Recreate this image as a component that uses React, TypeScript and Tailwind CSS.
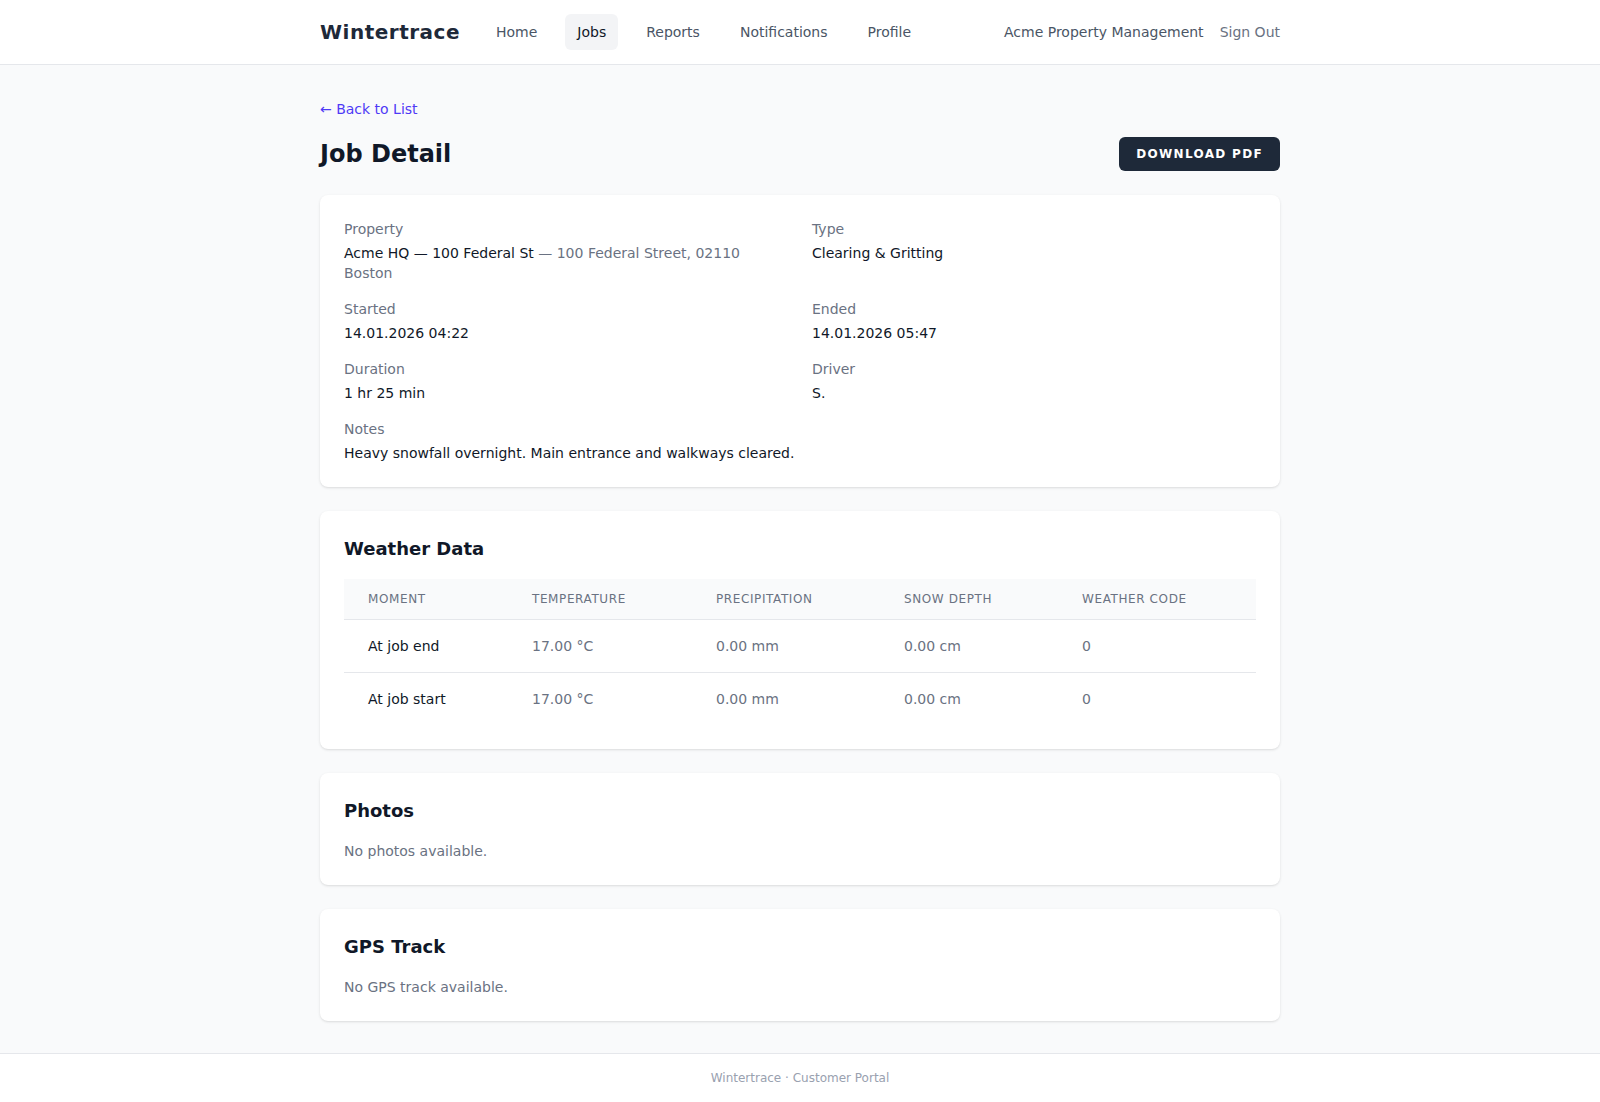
import React from "react";

const navItems = ["Home", "Jobs", "Reports", "Notifications", "Profile"];

const details: { label: string; value: React.ReactNode; full?: boolean }[] = [
  {
    label: "Property",
    value: (
      <>
        Acme HQ — 100 Federal St{" "}
        <span className="text-gray-500">— 100 Federal Street, 02110 Boston</span>
      </>
    ),
  },
  { label: "Type", value: "Clearing & Gritting" },
  { label: "Started", value: "14.01.2026 04:22" },
  { label: "Ended", value: "14.01.2026 05:47" },
  { label: "Duration", value: "1 hr 25 min" },
  { label: "Driver", value: "S." },
  { label: "Notes", value: "Heavy snowfall overnight. Main entrance and walkways cleared.", full: true },
];

const weatherRows = [
  { moment: "At job end", temp: "17.00 °C", precip: "0.00 mm", snow: "0.00 cm", code: "0" },
  { moment: "At job start", temp: "17.00 °C", precip: "0.00 mm", snow: "0.00 cm", code: "0" },
];

function Card({ children }: { children: React.ReactNode }) {
  return <section className="rounded-lg bg-white p-6 shadow-sm">{children}</section>;
}

export default function App() {
  return (
    <div
      className="flex min-h-screen flex-col bg-gray-50 text-gray-900"
      style={{ fontFamily: '"DejaVu Sans", "Liberation Sans", sans-serif' }}
    >
      <header className="border-b border-gray-200 bg-white">
        <div className="mx-auto flex h-16 w-[960px] items-center justify-between">
          <div className="flex items-center">
            <span className="text-xl font-bold tracking-wide text-gray-800">Wintertrace</span>
            <nav className="ml-6 flex items-center gap-4">
              {navItems.map((item) => (
                <a
                  key={item}
                  className={
                    item === "Jobs"
                      ? "rounded-md bg-gray-100 px-3 py-2 text-sm text-gray-900"
                      : "rounded-md px-3 py-2 text-sm text-gray-600"
                  }
                >
                  {item}
                </a>
              ))}
            </nav>
          </div>
          <div className="flex items-center gap-4 text-sm">
            <span className="text-gray-600">Acme Property Management</span>
            <a className="text-gray-500">Sign Out</a>
          </div>
        </div>
      </header>

      <main className="mx-auto w-[960px] flex-1 pb-8 pt-8">
        <a className="text-sm text-indigo-600">← Back to List</a>
        <div className="mb-6 mt-4 flex items-center justify-between">
          <h1 className="text-2xl font-bold text-gray-900">Job Detail</h1>
          <button className="h-[34px] rounded-md bg-gray-800 px-[17px] text-xs font-bold uppercase tracking-[0.11em] text-white">
            Download PDF
          </button>
        </div>

        <div className="flex flex-col gap-6">
          <Card>
            <dl className="grid grid-cols-2 gap-x-6 gap-y-4">
              {details.map((d) => (
                <div key={d.label} className={d.full ? "col-span-2" : ""}>
                  <dt className="text-sm text-gray-500">{d.label}</dt>
                  <dd className="mt-1 text-sm text-gray-900">{d.value}</dd>
                </div>
              ))}
            </dl>
          </Card>

          <Card>
            <h2 className="mb-4 text-lg font-bold text-gray-900">Weather Data</h2>
            <table className="w-full table-fixed text-left">
              <colgroup>
                <col className="w-[164px]" />
                <col className="w-[184px]" />
                <col className="w-[188px]" />
                <col className="w-[178px]" />
                <col />
              </colgroup>
              <thead className="bg-gray-50">
                <tr className="border-b border-gray-200">
                  {["Moment", "Temperature", "Precipitation", "Snow Depth", "Weather Code"].map((h) => (
                    <th
                      key={h}
                      className="px-6 py-3 text-xs font-normal uppercase tracking-wider text-gray-500"
                    >
                      {h}
                    </th>
                  ))}
                </tr>
              </thead>
              <tbody className="divide-y divide-gray-200">
                {weatherRows.map((r) => (
                  <tr key={r.moment}>
                    <td className="px-6 py-4 text-sm text-gray-900">{r.moment}</td>
                    <td className="px-6 py-4 text-sm text-gray-500">{r.temp}</td>
                    <td className="px-6 py-4 text-sm text-gray-500">{r.precip}</td>
                    <td className="px-6 py-4 text-sm text-gray-500">{r.snow}</td>
                    <td className="px-6 py-4 text-sm text-gray-500">{r.code}</td>
                  </tr>
                ))}
              </tbody>
            </table>
          </Card>

          <Card>
            <h2 className="text-lg font-bold text-gray-900">Photos</h2>
            <p className="mt-4 text-sm text-gray-500">No photos available.</p>
          </Card>

          <Card>
            <h2 className="text-lg font-bold text-gray-900">GPS Track</h2>
            <p className="mt-4 text-sm text-gray-500">No GPS track available.</p>
          </Card>
        </div>
      </main>

      <footer className="border-t border-gray-200 bg-white py-4 text-center text-xs text-gray-400">
        Wintertrace · Customer Portal
      </footer>
    </div>
  );
}
